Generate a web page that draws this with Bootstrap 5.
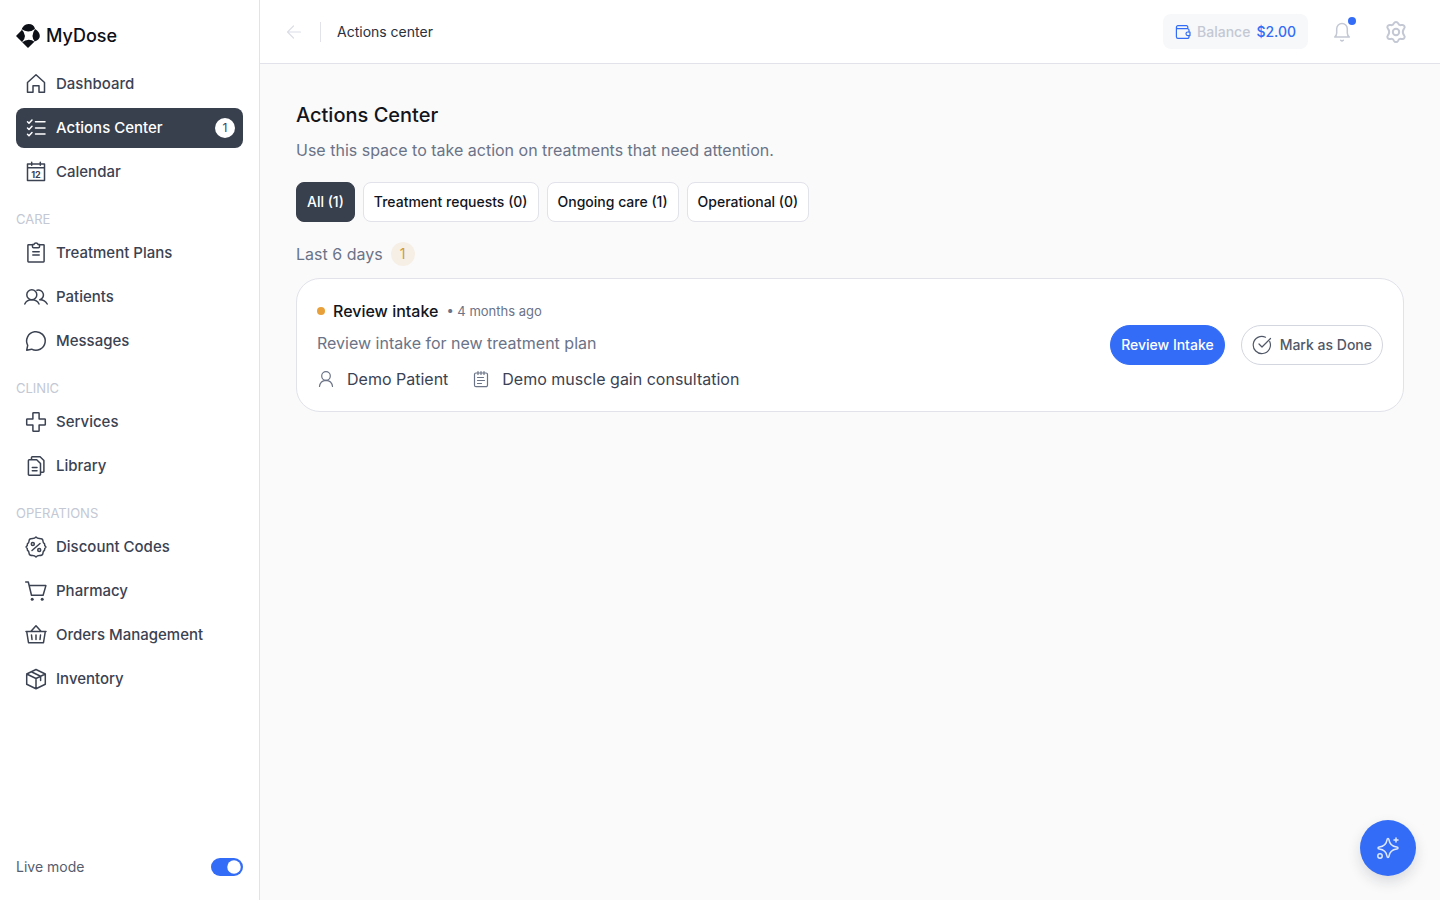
<!DOCTYPE html>
<html lang="en">
<head>
<meta charset="utf-8">
<meta name="viewport" content="width=device-width, initial-scale=1">
<title>MyDose – Actions Center</title>
<link href="https://cdn.jsdelivr.net/npm/bootstrap@5.3.0/dist/css/bootstrap.min.css" rel="stylesheet">
<style>
:root{--ink:#3b4252;--muted-ink:#6b7387;--faint:#c3c8d4;--line:#e1e2ea;--blue:#336cf6}
body{font-family:Inter,"Liberation Sans",sans-serif;font-size:16px;line-height:24px;color:var(--ink);background:#fafafa}
svg{flex:none;fill:none;stroke:currentColor;stroke-width:1.5;stroke-linejoin:round;stroke-linecap:round}
svg.thin{stroke-width:1.2}
.sidebar{width:260px;background:#fff;border-right:1px solid var(--line);position:sticky;top:0;height:100vh;padding:20px 16px}
.brand{height:32px;margin-bottom:12px;color:#0d1017;font-size:18px;font-weight:500;gap:6px}
.brand svg{fill:currentColor;stroke:none}
.side-link{height:40px;padding:0 8px;gap:8px;border-radius:8px;color:var(--ink);font-size:15px;font-weight:500;text-decoration:none}
.side-link.active{background:#383f4d;color:#fff}
.side-list{gap:4px}
.side-label{font-size:13px;font-weight:400;line-height:20px;color:var(--faint);margin:17px 0 4px}
.count{width:20px;height:20px;border-radius:50%;background:#fff;color:var(--ink);font-size:12px;font-weight:400}
.live{font-size:14px;line-height:26px;color:#555d6e}
.live .form-check-input{width:32px;height:18px;margin:0;border:0;box-shadow:none;background-color:var(--blue);background-size:18px}
.topbar{height:64px;background:#fff;border-bottom:1px solid var(--line);padding:0 32px 0 24px;font-size:14px}
.plain{border:0;background:none;padding:0;line-height:0;color:var(--faint)}
.back{color:#dcdee8}
.bell{margin:0 32px 0 24px}
.divider{width:1px;height:20px;background:var(--line)}
.crumb{color:#2a303c}
.balance{height:35px;padding:0 12px;gap:6px;border-radius:8px;background:#f7f8fa;color:var(--faint);font-weight:500;text-decoration:none}
.balance svg,.balance span{color:var(--blue)}
.bell-dot{position:absolute;top:-3px;right:-4px;width:8px;height:8px;border-radius:50%;background:var(--blue)}
.content{padding:36px}
h1{font-size:20px;line-height:30px;font-weight:500;color:#12151c;margin:0 0 8px}
.soft{color:var(--muted-ink)}
.tabs{gap:8px;margin:20px 0}
.tab-btn{height:40px;padding:0 10px;border:1px solid var(--line);border-radius:8px;background:#fff;color:#12151c;font-size:14px;font-weight:500}
.tab-btn.active{background:#383f4d;border-color:#383f4d;color:#fff}
.amber-count{width:24px;height:24px;border-radius:50%;background:#f6efe6;color:#d09a3c;font-size:14px}
.task{margin-top:12px;padding:20px;border:1px solid var(--line);border-radius:24px;background:#fff}
.task h2{font-size:16px;line-height:24px;font-weight:500;color:#12151c;margin:0}
.age{font-size:13px}
.meta{margin-top:12px}
.dot{width:8px;height:8px;border-radius:50%;background:#e8a03a}
.pill{height:40px;padding:0 10px;border-radius:20px;font-size:14px;font-weight:500;border:1px solid #d3d6df;background:#fff;color:#505868}
.pill.main{background:var(--blue);border-color:var(--blue);color:#fff}
.fab{position:fixed;right:24px;bottom:24px;width:56px;height:56px;border:0;border-radius:50%;background:var(--blue);color:#dfe8ff;box-shadow:0 6px 14px rgba(20,30,60,.14)}
</style>
</head>
<body>
<div class="d-flex min-vh-100">
<aside class="sidebar d-flex flex-column flex-shrink-0">
  <div class="brand d-flex align-items-center">
    <svg width="24" height="24" viewBox="0 0 24 24"><path d="M0 12 5.400 6.600Q7 0 12.500 0T19 5Q23.800 8 23.800 12T18.600 17.400L12 24Z"/><path fill="#fff" d="M5.300 5.100Q12.500 10.200 19.200 4.700 14 12 19 17.900 12.300 13.200 5.800 18.600 12.300 12 5.300 5.100Z"/></svg>
    <span>MyDose</span>
  </div>
  <nav class="d-flex flex-column" aria-label="Main">
    <div class="side-list d-flex flex-column">
      <a class="side-link d-flex align-items-center" href="#"><svg width="24" height="24"><path d="M3.500 10.500 12 2.700l8.500 7.800V20.300H15V13.700H9V20.300H3.500Z"/></svg>Dashboard</a>
      <a class="side-link active d-flex align-items-center" href="#" aria-current="page"><svg width="24" height="24"><path d="M11.500 5.700H21M11.500 12H21M11.500 18H21M3.500 5.700l1.500 1.500 3-3.200M3.500 12l1.500 1.500 3-3.200M3.500 18.300l1.500 1.500 3-3.200"/></svg>Actions Center<span class="count ms-auto d-flex align-items-center justify-content-center">1</span></a>
      <a class="side-link d-flex align-items-center" href="#"><svg width="24" height="24"><path d="M3.500 4h17v16.500h-17ZM3.500 7.800h17M7.700 2.300v3M16.300 2.300v3"/><text x="12" y="17.500" text-anchor="middle" font-size="9" font-weight="700" fill="currentColor" stroke="none">12</text></svg>Calendar</a>
    </div>
    <div class="side-label">CARE</div>
    <div class="side-list d-flex flex-column">
      <a class="side-link d-flex align-items-center" href="#"><svg width="24" height="24"><path d="M8.500 3.700H4.500a.6.6 0 0 0-.6.6v16a.6.6 0 0 0 .6.6h15a.6.6 0 0 0 .6-.6v-16a.6.6 0 0 0-.6-.6H15.500M8.500 3.500h1.400a2.200 2.200 0 0 1 4.200 0h1.400v2.200a1 1 0 0 1-1 1h-5a1 1 0 0 1-1-1ZM8.800 10.700h6.400M8.800 14h6.400"/></svg>Treatment Plans</a>
      <a class="side-link d-flex align-items-center" href="#"><svg width="24" height="24"><circle cx="7.800" cy="9.800" r="5"/><path d="M.8 19q1.700-4.200 7-4.200t7.200 4.200M13 5.200a5 5 0 1 1 2.800 9.600q5.300.2 7.400 4.200"/></svg>Patients</a>
      <a class="side-link d-flex align-items-center" href="#"><svg width="24" height="24"><path d="M2.700 21.200 3.700 16.300A9.300 9.300 0 1 1 7.600 20.200Z"/></svg>Messages</a>
    </div>
    <div class="side-label">CLINIC</div>
    <div class="side-list d-flex flex-column">
      <a class="side-link d-flex align-items-center" href="#"><svg width="24" height="24"><path d="M9.500 2.700h5a.6.6 0 0 1 .6.6v5.600h5.600a.6.6 0 0 1 .6.6v5a.6.6 0 0 1-.6.6h-5.600v5.600a.6.6 0 0 1-.6.6h-5a.6.6 0 0 1-.6-.6v-5.600H3.300a.6.6 0 0 1-.6-.6v-5a.6.6 0 0 1 .6-.6h5.600V3.300a.6.6 0 0 1 .6-.6Z"/></svg>Services</a>
      <a class="side-link d-flex align-items-center" href="#"><svg width="24" height="24"><path d="M5.200 5.700h7.500l3.800 3.800v11a.8.800 0 0 1-.8.8H5.200a.8.800 0 0 1-.8-.8v-14a.8.800 0 0 1 .8-.8ZM7.500 5.500V3.500a.8.800 0 0 1 .8-.8h7.800l3.800 3.800v11a.8.800 0 0 1-.8.800h-2.400M8.300 13.500h4.700M8.300 16.800h4.700"/></svg>Library</a>
    </div>
    <div class="side-label">OPERATIONS</div>
    <div class="side-list d-flex flex-column">
      <a class="side-link d-flex align-items-center" href="#"><svg width="24" height="24"><path d="M12 2a4.500 4.500 0 0 0 3.300 1.500Q18.500 3.500 18.800 5.200 19 8 20.500 8.700 20.300 10.800 22 12 20.300 13.200 20.500 15.300 19 16 18.800 18.800 18.500 20.500 15.300 20.500A4.500 4.500 0 0 0 12 22 4.500 4.500 0 0 0 8.700 20.500Q5.500 20.500 5.200 18.800 5 16 3.500 15.300 3.700 13.200 2 12 3.700 10.800 3.500 8.700 5 8 5.200 5.200 5.500 3.500 8.700 3.500A4.500 4.500 0 0 0 12 2ZM8 15.500 16 8.500"/><circle cx="8.800" cy="9" r="1.500"/><circle cx="15.200" cy="15" r="1.500"/></svg>Discount Codes</a>
      <a class="side-link d-flex align-items-center" href="#"><svg width="24" height="24"><path d="M1.700 3h2.600l3.200 13.300h11.600L21.900 6.600H5.200"/><g fill="currentColor" stroke="none"><circle cx="8.200" cy="20.300" r="1.500"/><circle cx="18.200" cy="20.300" r="1.500"/></g></svg>Pharmacy</a>
      <a class="side-link d-flex align-items-center" href="#"><svg width="24" height="24"><path d="M2 8.500h20M2.700 8.500l1.800 11.200h15L21.300 8.500M7 8.300l5-5.500 5 5.500M7.500 12l.5 4.500M12 12v4.500M16.500 12l-.5 4.500"/></svg>Orders Management</a>
      <a class="side-link d-flex align-items-center" href="#"><svg width="24" height="24"><path d="M12 2.500 21.300 7v10.300L12 21.700 2.700 17.300V7ZM2.700 7 12 11.500 21.300 7M12 11.500v10.200M7.300 4.800l9.300 4.500v4.200"/></svg>Inventory</a>
    </div>
  </nav>
  <div class="live form-switch p-0 m-0 mt-auto d-flex align-items-center justify-content-between">
    <label for="live">Live mode</label>
    <input class="form-check-input" type="checkbox" role="switch" id="live" checked>
  </div>
</aside>
<div class="flex-grow-1">
  <header class="topbar d-flex align-items-center">
    <button class="plain back" aria-label="Back"><svg class="thin" width="20" height="20"><path d="M16.500 10h-13M9.500 4 3.500 10l6 6"/></svg></button>
    <span class="divider mx-3"></span>
    <span class="crumb">Actions center</span>
    <a class="balance ms-auto d-flex align-items-center" href="#"><svg class="thin" width="16" height="16"><path d="M12.800 4.700V3a1.300 1.300 0 0 0-1.300-1.300H3A1.600 1.600 0 0 0 1.400 3.300v9.500a1.600 1.600 0 0 0 1.600 1.600h9.500a1.500 1.500 0 0 0 1.500-1.500v-1.200M1.400 3.200A1.500 1.500 0 0 0 3 4.700h9.500A1.500 1.500 0 0 1 14 6.200v1.500"/><path d="M15 8h-2.200a1.800 1.800 0 0 0 0 3.600H15Z"/></svg>Balance <span>$2.00</span></a>
    <button class="plain bell position-relative" aria-label="Notifications"><svg width="20" height="24"><path d="M2.700 17q2-1.600 2-4V8.800a5.300 5.300 0 0 1 10.600 0V13q0 2.400 2 4ZM8.700 20.200q1.300 1.300 2.600 0"/></svg><span class="bell-dot"></span></button>
    <button class="plain" aria-label="Settings"><svg width="24" height="24" viewBox="0 0 24 24"><path stroke-width="2" d="M10 3.200a2.200 2.200 0 0 1 4 0q.9 2.200 3 1.900l1-.1a2.200 2.200 0 0 1 2.200 3.500l-.6.800Q18 12 19.600 14.700l.6.800A2.200 2.200 0 0 1 18 19l-1-.1q-2.100-.3-3 1.900a2.200 2.200 0 0 1-4 0q-.9-2.200-3-1.900l-1 .1a2.200 2.200 0 0 1-2.200-3.500l.6-.8Q6 12 4.400 9.300l-.6-.8A2.200 2.200 0 0 1 6 5l1 .1q2.100.3 3-1.900Z"/><circle cx="12" cy="12" r="3.200" stroke-width="2"/></svg></button>
  </header>
  <main class="content">
    <h1>Actions Center</h1>
    <p class="soft m-0">Use this space to take action on treatments that need attention.</p>
    <div class="tabs d-flex flex-wrap">
      <button class="tab-btn active">All (1)</button>
      <button class="tab-btn">Treatment requests (0)</button>
      <button class="tab-btn">Ongoing care (1)</button>
      <button class="tab-btn">Operational (0)</button>
    </div>
    <div class="soft d-flex align-items-center gap-2">Last 6 days <span class="amber-count d-flex align-items-center justify-content-center">1</span></div>
    <section class="task d-flex align-items-center justify-content-between">
      <div>
        <div class="d-flex align-items-center gap-2"><span class="dot"></span><h2>Review intake</h2><span class="soft age">• 4 months ago</span></div>
        <div class="soft mt-2">Review intake for new treatment plan</div>
        <div class="meta d-flex align-items-center">
          <svg class="soft thin" width="18" height="18"><circle cx="9" cy="6" r="4.300"/><path d="M2.500 16.500q.7-6 6.500-6.200 5.800.2 6.500 6.200"/></svg><span class="ms-2 ps-1">Demo Patient</span>
          <svg class="soft thin ms-4" width="18" height="18"><path d="M4 3h10a1.500 1.500 0 0 1 1.500 1.500v10.700a1.500 1.500 0 0 1-1.500 1.500H4a1.500 1.500 0 0 1-1.500-1.500V4.500A1.500 1.500 0 0 1 4 3ZM6 1.500v3M9 1.500v3M12 1.500v3M5.500 7.500h6M5.500 10.500h7M5.500 13.500h4"/></svg><span class="ms-2 ps-1">Demo muscle gain consultation</span>
        </div>
      </div>
      <div class="d-flex gap-3">
        <button class="pill main">Review Intake</button>
        <button class="pill d-flex align-items-center gap-2"><svg class="thin" width="20" height="20"><path d="M17.700 6.500A8.600 8.600 0 1 1 13.500 2.200M7 9l3 3 8.500-8.500"/></svg>Mark as Done</button>
      </div>
    </section>
  </main>
</div>
</div>
<button class="fab d-flex align-items-center justify-content-center" aria-label="Assistant"><svg width="24" height="24"><path d="M12 2.500q.8 0 1 1.300.9 6.300 7.700 7.200 1.300.2 1.300 1t-1.300 1q-6.800.9-7.700 7.200-.2 1.300-1 1.300t-1-1.300q-.9-6.300-7.700-7.200Q2 12.800 2 12t1.300-1Q10.100 10.100 11 3.800q.2-1.300 1-1.300ZM20 2v4M18 4h4"/><circle cx="4" cy="20" r="2.200"/></svg></button>
<script src="https://cdn.jsdelivr.net/npm/bootstrap@5.3.0/dist/js/bootstrap.bundle.min.js"></script>
</body>
</html>
